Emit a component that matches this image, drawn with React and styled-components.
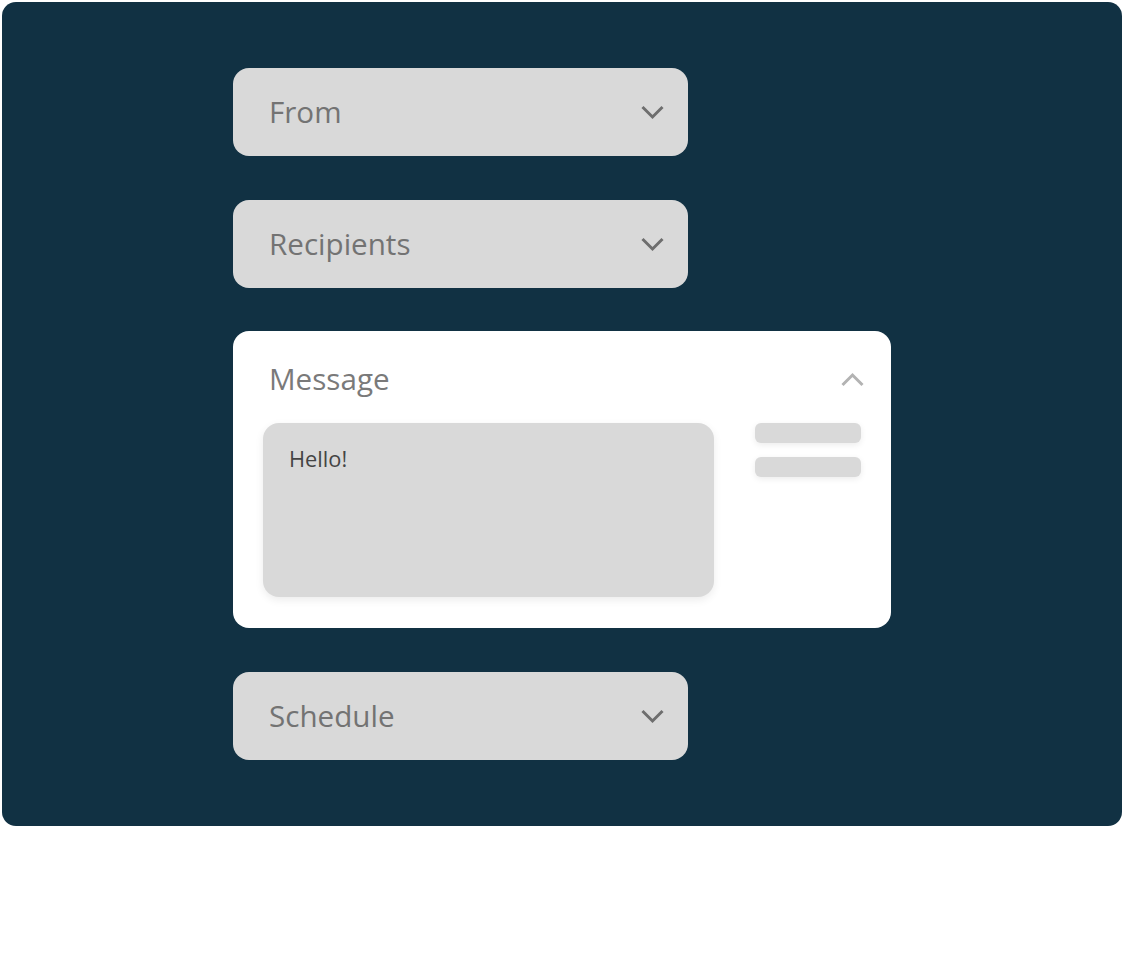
import React from "react";
import styled, { createGlobalStyle } from "styled-components";

const Global = createGlobalStyle`
  html, body { margin: 0; padding: 0; background: #ffffff; }
  body { font-family: "Open Sans", "Noto Sans", sans-serif; }
`;

const Page = styled.div`
  padding: 2px;
  width: 1124px;
  box-sizing: border-box;
`;

const Panel = styled.div`
  height: 824px;
  border-radius: 14px;
  background: #113143;
  box-sizing: border-box;
  padding: 66px 0 0 231px;
  display: flex;
  flex-direction: column;
  align-items: flex-start;
  gap: 44px;
`;

const Select = styled.div`
  width: 455px;
  height: 88px;
  box-sizing: border-box;
  border-radius: 16px;
  background: #d9d9d9;
  display: flex;
  align-items: center;
  justify-content: space-between;
  padding: 0 24px 0 36px;
`;

const Label = styled.span`
  font-size: 29.6px;
  line-height: 1;
  color: ${(p) => (p.$muted ? "#7a7a7a" : "#737373")};
  margin-top: -1px;
`;

const Card = styled.div`
  width: 658px;
  height: 297px;
  box-sizing: border-box;
  border-radius: 16px;
  background: #ffffff;
  padding: 29px 27px 0 30px;
  margin-top: -1px;
  display: flex;
  flex-direction: column;
`;

const CardHead = styled.div`
  display: flex;
  align-items: center;
  justify-content: space-between;
  padding-left: 6px;
  height: 38px;
`;

const CardBody = styled.div`
  display: flex;
  gap: 41px;
  margin-top: 25px;
`;

const TextArea = styled.div`
  width: 451px;
  height: 174px;
  box-sizing: border-box;
  border-radius: 16px;
  background: #d9d9d9;
  box-shadow: 0 3px 8px rgba(0, 0, 0, 0.08);
  padding: 22px 26px;
  font-size: 21.8px;
  line-height: 1.3;
  color: #444444;
`;

const Side = styled.div`
  display: flex;
  flex-direction: column;
  gap: 14px;
`;

const Bar = styled.div`
  width: 106px;
  height: 20px;
  border-radius: 6px;
  background: #d9d9d9;
  box-shadow: 0 2px 6px rgba(0, 0, 0, 0.08);
`;

const Chevron = ({ up, color }) => (
  <svg width="23" height="15" viewBox="0 0 23 15" fill="none">
    <path
      d={up ? "M1.5 13 L11.5 3 L21.5 13" : "M1.5 2 L11.5 12 L21.5 2"}
      stroke={color}
      strokeWidth="3"
      strokeLinecap="butt"
      strokeLinejoin="miter"
    />
  </svg>
);

export default function App() {
  return (
    <>
      <Global />
      <Page>
        <Panel>
          <Select>
            <Label>From</Label>
            <Chevron color="#6e6e6e" />
          </Select>
          <Select>
            <Label>Recipients</Label>
            <Chevron color="#6e6e6e" />
          </Select>
          <Card>
            <CardHead>
              <Label $muted>Message</Label>
              <Chevron up color="#b3b3b3" />
            </CardHead>
            <CardBody>
              <TextArea>Hello!</TextArea>
              <Side>
                <Bar />
                <Bar />
              </Side>
            </CardBody>
          </Card>
          <Select>
            <Label>Schedule</Label>
            <Chevron color="#6e6e6e" />
          </Select>
        </Panel>
      </Page>
    </>
  );
}
